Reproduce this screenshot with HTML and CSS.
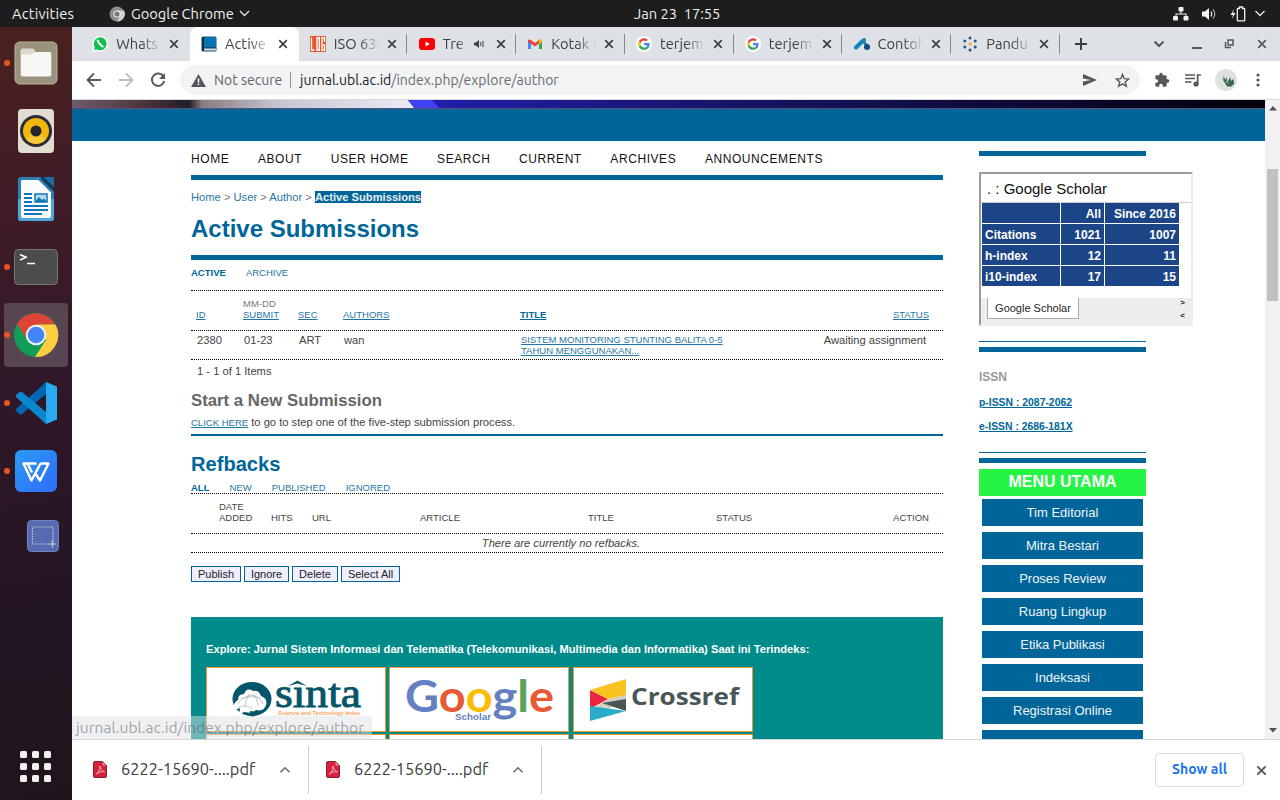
FILE: index.html
```html
<!DOCTYPE html>
<html lang="en">
<head>
<meta charset="utf-8">
<title>Active Submissions</title>
<link rel="stylesheet" href="styles.css">
</head>
<body>
<svg width="0" height="0" class="defs">
  <defs>
    <symbol id="close" viewBox="0 0 10 10"><path d="M1.2 1.2 8.8 8.8M8.8 1.2 1.2 8.8" stroke="currentColor" stroke-width="1.7"/></symbol>
    <symbol id="g" viewBox="0 0 48 48"><circle cx="24" cy="24" r="24" fill="#fff"/><g transform="translate(6.5 6.5) scale(.73)"><path fill="#EA4335" d="M24 9.5c3.54 0 6.71 1.22 9.21 3.6l6.85-6.85C35.9 2.38 30.47 0 24 0 14.62 0 6.51 5.38 2.56 13.22l7.98 6.19C12.43 13.72 17.74 9.5 24 9.5z"/><path fill="#4285F4" d="M46.98 24.55c0-1.57-.15-3.09-.38-4.55H24v9.02h12.94c-.58 2.96-2.26 5.48-4.78 7.18l7.73 6c4.51-4.18 7.09-10.36 7.09-17.65z"/><path fill="#FBBC05" d="M10.53 28.59c-.48-1.45-.76-2.99-.76-4.59s.27-3.14.76-4.59l-7.98-6.19C.92 16.46 0 20.12 0 24c0 3.88.92 7.54 2.56 10.78l7.97-6.19z"/><path fill="#34A853" d="M24 48c6.48 0 11.93-2.13 15.89-5.81l-7.73-6c-2.15 1.45-4.92 2.3-8.16 2.3-6.26 0-11.57-4.22-13.47-9.91l-7.98 6.19C6.51 42.62 14.62 48 24 48z"/></g></symbol>
    <symbol id="pdf" viewBox="0 0 14 17"><path d="M2 .5h7.500l4 4V15q0 1.500-1.500 1.500H2Q.5 16.500.5 15V2Q.5.5 2 .5z" fill="#dc1f3c" stroke="#7d2535"/><path d="M9.500 .7v3.800h3.800z" fill="#f38a98"/><path d="M3.500 13c1.500-1 4-5 3.500-8 .3 3 2.500 5.500 4.500 5.800C9 10.300 5.500 11 3.500 13z" fill="none" stroke="#fbc3cb" stroke-width=".9"/></symbol>
    <symbol id="up" viewBox="0 0 12 8"><path d="M1.500 6.300 6 1.800l4.500 4.500" fill="none" stroke="#6b6e72" stroke-width="1.600"/></symbol>
  </defs>
</svg>

<header class="topbar">
  <span class="activities">Activities</span>
  <span class="appmenu">
    <svg width="16" height="16" viewBox="0 0 16 16"><circle cx="8" cy="8" r="7.500" fill="#8c8c8c"/><path d="M8 4.500h7A7.500 7.500 0 0 1 8 15.500l3-5.500z" fill="#d0d0d0"/><circle cx="8" cy="8" r="3.600" fill="#eee"/><circle cx="8" cy="8" r="2.600" fill="#777"/></svg>
    <span class="appname">Google Chrome</span>
    <svg width="11" height="7" viewBox="0 0 11 7"><path d="M1 1l4.500 4.500L10 1" fill="none" stroke="#e8e8e8" stroke-width="1.300"/></svg>
  </span>
  <span class="clock">Jan 23&nbsp; 17:55</span>
  <span class="tray">
    <svg width="16" height="14" viewBox="0 0 16 14" fill="#f2f2f2"><rect x="5.500" y="0" width="5" height="4.500" rx="1"/><rect x="0" y="9" width="5" height="4.500" rx="1"/><rect x="10.500" y="9" width="5" height="4.500" rx="1"/><path d="M7.500 4h1v2.500h5V9h-1V7.500h-9V9h-1V6.500h5z"/></svg>
    <svg width="16" height="14" viewBox="0 0 16 14"><path d="M1 4.500h3L8 1v12L4 9.500H1z" fill="#f2f2f2"/><path d="M10 4.500q1.600 2.500 0 5" fill="none" stroke="#f2f2f2" stroke-width="1.300"/><path d="M12 2.500q3.600 4.500 0 9" fill="none" stroke="#999" stroke-width="1.300"/></svg>
    <svg width="16" height="16" viewBox="0 0 16 16"><path d="M4 3 .5 9H3l-1 4 3.500-6H3z" fill="#f2f2f2"/><path d="M8 2.500h1.500v-1.500h3v1.500H14q.7 0 .7.700v11q0 .7-.7.700H8q-.7 0-.7-.7v-11q0-.7.700-.7z" fill="none" stroke="#f2f2f2" stroke-width="1.300"/></svg>
    <svg class="tdown" width="12" height="7" viewBox="0 0 11 7"><path d="M1 1l4.500 4.500L10 1" fill="none" stroke="#e8e8e8" stroke-width="1.300"/></svg>
  </span>
</header>

<div class="desktop">
  <aside class="dock">
    <div class="slot run"><svg width="44" height="44" viewBox="0 0 46 46"><rect x="1" y="1" width="44" height="44" rx="5" fill="#9a927d" stroke="#b9b39f"/><path d="M7 10q0-2 2-2h10q1 0 2 1.500l1.500 2H37q2 0 2 2V35q0 2-2 2H9q-2 0-2-2z" fill="#f8f7f5"/><path d="M7 14V10q0-2 2-2h10q1 0 2 1.500l1.500 2q-3 2.500-5 2.500z" fill="#dedace"/></svg></div>
    <div class="slot"><svg width="46" height="46" viewBox="0 0 46 46"><rect x="5" y="1" width="36" height="44" rx="4" fill="#e2ddd1"/><circle cx="23" cy="23" r="16" fill="#2a2c37"/><circle cx="23" cy="23" r="13" fill="#f2b70f"/><path d="M13 31a13 13 0 0 0 20 0L23 23z" fill="#f7c93a"/><circle cx="23" cy="23" r="5.500" fill="#25262c"/></svg></div>
    <div class="slot"><svg width="46" height="46" viewBox="0 0 46 46"><path d="M8 1h20l13 13v28q0 3-3 3H8q-3 0-3-3V4q0-3 3-3z" fill="#2c7fb6"/><path d="M5 23h36v19q0 3-3 3H8q-3 0-3-3z" fill="#4ea7db"/><path d="M9 4h16.500L38 16.500V40q0 2-2 2H10q-2 0-2-2V5q0-1 1-1z" fill="#fbfbfb"/><path d="M30 1h10q1 0 1 1v9z" fill="#1a6ea6"/><path d="M27 2l14 14v-4L31 1z" fill="#123d5c"/><path d="M11 18h8M11 22h8M11 26h8M11 30h24M11 34h24M11 38h18" stroke="#1277b6" stroke-width="2"/><path d="M22 18h12v8H22z" fill="#b6d9ef" stroke="#1277b6" stroke-width="1.500"/><path d="m22 26 4-5 3 3 2-1.500 3 3.500z" fill="#1277b6"/></svg></div>
    <div class="slot run"><svg width="46" height="38" viewBox="0 0 46 38"><rect x="1.500" y="1.500" width="43" height="35" rx="4" fill="#4c4c4b" stroke="#767674"/><path d="m7 6.500 6 2.800-6 2.800M14 15.500h8" fill="none" stroke="#fff" stroke-width="1.700"/></svg></div>
    <div class="slot run current"><svg width="46" height="46" viewBox="0 0 46 46"><circle cx="23" cy="23" r="22" fill="#109d58"/><path d="M4 12A22 22 0 0 1 42 12.500H23q-8 1-9.500 14z" fill="#dc4437"/><path d="M23 12.500h19.500A22 22 0 0 1 22 45l11-17z" fill="#ffcd40"/><circle cx="23" cy="23" r="10.300" fill="#f1f1f1"/><circle cx="23" cy="23" r="8.300" fill="#4285f5"/></svg></div>
    <div class="slot run"><svg width="46" height="46" viewBox="0 0 46 46"><path d="M33 2v12L9 34q-1.500 1-2.500 0l-3.500-3q-1-1 0-2z" fill="#0066b0"/><path d="M3 17q-1-1 0-2l3.500-3q1-1 2.500 0l24 20v12z" fill="#0a88cf"/><path d="M33 2l11 4.500v33L33 44z" fill="#27aaf0"/></svg></div>
    <div class="slot run"><svg width="46" height="46" viewBox="0 0 46 46"><defs><linearGradient id="w" x2="1" y2="1"><stop stop-color="#2a9bf3"/><stop offset="1" stop-color="#2f6bfa"/></linearGradient></defs><rect x="2" y="2" width="42" height="42" rx="6" fill="url(#w)"/><path d="M23.500 15.500H10.500L18.500 32.500 27.500 15.500M22 25l5 7.500 8.500-17H27.500M14.500 15.500l4.500 9" fill="none" stroke="#fff" stroke-width="2.400" stroke-linejoin="round"/></svg></div>
    <div class="slot shot"><svg width="32" height="32" viewBox="0 0 32 32"><rect x=".5" y=".5" width="31" height="31" rx="4" fill="#566ab4" stroke="#7184c4"/><path d="M26 22V7H5.500v17H22" fill="none" stroke="#d0cfc8" stroke-width="1.200" stroke-dasharray="1.400 1.200"/><path d="M25.500 20.500v7M22 24h7" stroke="#d0cfc8" stroke-width="1.200"/></svg></div>
    <div class="apps"><i></i><i></i><i></i><i></i><i></i><i></i><i></i><i></i><i></i></div>
  </aside>

  <main class="window">
    <div class="tabs">
      <div class="tab nosep"><svg width="16" height="16" viewBox="0 0 16 16"><path d="M0 16 1.200 12A8 8 0 1 1 4.500 15z" fill="#fff"/><circle cx="8.200" cy="7.800" r="6.500" fill="#10c04d"/><path d="m2 14 1-3.500 2.500 2.500z" fill="#10c04d"/><path d="M5.700 4.500q1 3.500 5 6" fill="none" stroke="#fff" stroke-width="2" stroke-linecap="round"/></svg><span>Whats</span><svg class="x"><use href="#close"/></svg></div>
      <div class="tab active nosep"><svg width="16" height="16" viewBox="0 0 16 16"><rect x=".5" y=".5" width="15" height="15" rx="1.500" fill="#174a6e"/><path d="M3 1h12v10H3z" fill="#0673b3"/><path d="M3 12.500h12v2H2.500z" fill="#cfe0ea"/><path d="M1 1h2v14H1z" fill="#152c3d"/></svg><span>Active</span><svg class="x"><use href="#close"/></svg></div>
      <div class="tab"><svg width="16" height="16" viewBox="0 0 16 16"><rect width="16" height="16" fill="#e8522b"/><path d="M1.500 1.500v12.500h3M7 1.700h2.300v12.600H7zM14.500 6V1.700h-2.500v12.600h2.500V9H13" fill="none" stroke="#fff" stroke-width="1.400"/></svg><span>ISO 639</span><svg class="x"><use href="#close"/></svg></div>
      <div class="tab sound"><svg width="16" height="16" viewBox="0 0 16 16"><rect y="2" width="16" height="12" rx="3" fill="#f00"/><path d="m6.500 5.500 4.500 2.500-4.500 2.500z" fill="#fff"/></svg><span>Tre</span><svg class="spk" width="10" height="10" viewBox="0 0 10 10"><path d="M0 3.500h2L5 1v8L2 6.500H0z" fill="#3c4043"/><path d="M6.800 3v4M9 1.800v6.400" stroke="#3c4043" stroke-width="1"/></svg><svg class="x"><use href="#close"/></svg></div>
      <div class="tab"><svg width="16" height="16" viewBox="0 0 16 16"><path d="M1 4v9h3V7z" fill="#4285f4"/><path d="M15 4v9h-3V7z" fill="#34a853"/><path d="M1 3.500 4 4l4 3 4-3 3-.5v2L8 10.500 1 5.500z" fill="#ea4335"/><path d="M12 4q3-2 3 .5v1.500l-3 2.200z" fill="#fbbc04"/></svg><span>Kotak M</span><svg class="x"><use href="#close"/></svg></div>
      <div class="tab"><svg width="16" height="16"><use href="#g"/></svg><span>terjem</span><svg class="x"><use href="#close"/></svg></div>
      <div class="tab"><svg width="16" height="16"><use href="#g"/></svg><span>terjem</span><svg class="x"><use href="#close"/></svg></div>
      <div class="tab"><svg width="16" height="16" viewBox="0 0 16 16"><path d="M2 11.500 8 5.500 10 4" stroke="#1483bd" stroke-width="4" stroke-linecap="round" fill="none"/><path d="M10 6l3.500 5" stroke="#1483bd" stroke-width="3"/><circle cx="13" cy="11" r="3" fill="#124a82"/></svg><span>Contoh</span><svg class="x"><use href="#close"/></svg></div>
      <div class="tab"><svg width="16" height="16" viewBox="0 0 16 16" fill="#1f5484"><circle cx="8" cy="2" r="1.500"/><circle cx="8" cy="14" r="1.500"/><circle cx="2.800" cy="5" r="1.500"/><circle cx="13.200" cy="5" r="1.500"/><circle cx="2.800" cy="11" r="1.500"/><circle cx="13.200" cy="11" r="1.500"/><circle cx="8" cy="8" r="1.700" fill="#f5ae3c"/></svg><span>Pandu</span><svg class="x"><use href="#close"/></svg></div>
      <div class="tabctl">
        <svg width="12" height="12" viewBox="0 0 12 12"><path d="M6 0v12M0 6h12" stroke="#3c4043" stroke-width="2"/></svg>
        <svg class="c2" width="12" height="8" viewBox="0 0 12 8"><path d="M1.500 1.500 6 6l4.500-4.500" fill="none" stroke="#54575b" stroke-width="2"/></svg>
        <svg class="c3" width="10" height="12" viewBox="0 0 10 12"><path d="M0 10h10" stroke="#54575b" stroke-width="2"/></svg>
        <svg class="c4" width="10" height="10" viewBox="0 0 10 10"><path d="M4 1h5v5H4zM1.500 3v5.500H7" fill="none" stroke="#54575b" stroke-width="1.500"/></svg>
        <svg class="c5" width="10" height="10"><use href="#close"/></svg>
      </div>
    </div>

    <div class="toolbar">
      <svg width="16" height="16" viewBox="0 0 16 16"><path d="M15 8H2M8 1.500 1.500 8 8 14.500" fill="none" stroke="#54575b" stroke-width="1.800"/></svg>
      <svg width="16" height="16" viewBox="0 0 16 16"><path d="M1 8h13M8 1.500 14.500 8 8 14.500" fill="none" stroke="#babcbe" stroke-width="1.800"/></svg>
      <svg width="16" height="16" viewBox="0 0 16 16"><path d="M13.500 4.500A6.200 6.200 0 1 0 14.200 9" fill="none" stroke="#54575b" stroke-width="1.900"/><path d="M15 1v6H9z" fill="#54575b"/></svg>
      <div class="omnibox">
        <svg width="15" height="13" viewBox="0 0 15 13"><path d="M7.500 0 15 13H0z" fill="#54575b"/><path d="M7.500 4.500v4M7.500 9.500v1.600" stroke="#fff" stroke-width="1.500"/></svg>
        <span class="ns">Not secure</span><b></b>
        <span class="url"><em>jurnal.ubl.ac.id</em>/index.php/explore/author</span>
        <svg class="send" width="14" height="12" viewBox="0 0 14 12"><path d="M0 0 14 6 0 12V7.500L8 6 0 4.500z" fill="#54575b"/></svg>
        <svg width="15" height="15" viewBox="0 0 15 15"><path d="m7.500 1.500 1.700 4.200 4.500.3-3.500 2.900 1.200 4.400-3.900-2.400-3.900 2.400 1.200-4.400L1.300 6l4.500-.3z" fill="none" stroke="#54575b" stroke-width="1.400"/></svg>
      </div>
      <svg class="ext" width="16" height="16" viewBox="0 0 24 24"><path fill="#54575b" d="M20.500 11H19V7c0-1.100-.9-2-2-2h-4V3.500a2.500 2.500 0 0 0-5 0V5H4c-1.100 0-2 .9-2 2v3.800h1.500a2.700 2.700 0 0 1 0 5.400H2V20c0 1.100.9 2 2 2h3.800v-1.500a2.700 2.700 0 0 1 5.400 0V22H17c1.100 0 2-.9 2-2v-4h1.500a2.500 2.500 0 0 0 0-5z"/></svg>
      <svg class="ml" width="17" height="14" viewBox="0 0 17 14"><path d="M0 2h10M0 5.500h10M0 9h6.500" stroke="#54575b" stroke-width="1.500"/><path d="M12.700 11V2H16" fill="none" stroke="#54575b" stroke-width="1.700"/><circle cx="11" cy="11" r="2.600" fill="#54575b"/></svg>
      <svg class="av" width="22" height="22" viewBox="0 0 22 22"><circle cx="11" cy="11" r="11" fill="#dfe1df"/><path d="m6 7 2.500 4L8.500 7l2 4 1-3 .8 5 3-5 .5 4 2.500-2 1 4.500-3 3h-4l-2.500-3.500z" fill="#35684c"/><path d="m10 14 2-2 1.500 3" stroke="#a9cdb8" stroke-width=".8" fill="none"/></svg>
      <svg class="more" width="4" height="14" viewBox="0 0 4 14" fill="#54575b"><circle cx="2" cy="2" r="1.600"/><circle cx="2" cy="7" r="1.600"/><circle cx="2" cy="12" r="1.600"/></svg>
    </div>

    <div class="viewport">
      <div class="page">
        <div class="banner"><svg width="1193" height="9" viewBox="0 0 1193 9" preserveAspectRatio="none"><defs><linearGradient id="bn"><stop stop-color="#2b22c4"/><stop offset=".3" stop-color="#221eaa"/><stop offset=".6" stop-color="#15125c"/><stop offset="1" stop-color="#03020c"/></linearGradient><linearGradient id="hd"><stop stop-color="#6e5b6c"/><stop offset=".15" stop-color="#5a3f48"/><stop offset=".27" stop-color="#3a2831"/><stop offset=".34" stop-color="#201d2d"/><stop offset=".38" stop-color="#8c7a82"/><stop offset=".6" stop-color="#c4c6d2"/><stop offset="1" stop-color="#eaedf6"/></linearGradient></defs><rect width="1193" height="9" fill="url(#bn)"/><path d="M0 0h336l7 9H0z" fill="url(#hd)"/><path d="M336 0h24l8 9h-25z" fill="#4242f5"/><path d="M0 8.500h1193" stroke="#555075"/></svg></div>
        <div class="bluebar"></div>
        <div class="cols">
          <section class="content">
            <nav class="nav"><a>HOME</a><a>ABOUT</a><a>USER HOME</a><a>SEARCH</a><a>CURRENT</a><a>ARCHIVES</a><a>ANNOUNCEMENTS</a></nav>
            <div class="crumb"><a>Home</a> &gt; <a>User</a> &gt; <a>Author</a> &gt; <strong>Active Submissions</strong></div>
            <h2>Active Submissions</h2>
            <div class="sub first"><b>ACTIVE</b><a>ARCHIVE</a></div>
            <div class="row head r1"><span><u>ID</u></span><span><i>MM-DD</i><br><u>SUBMIT</u></span><span><u>SEC</u></span><span><u>AUTHORS</u></span><span><u class="bold">TITLE</u></span><span class="end"><u>STATUS</u></span></div>
            <div class="row data r1"><span>2380</span><span>01-23</span><span>ART</span><span>wan</span><span class="small"><u>SISTEM MONITORING STUNTING BALITA 0-5<br>TAHUN MENGGUNAKAN...</u></span><span class="end">Awaiting assignment</span></div>
            <div class="items">1 - 1 of 1 Items</div>
            <h4>Start a New Submission</h4>
            <p class="start"><u class="small">CLICK HERE</u> to go to step one of the five-step submission process.</p>
            <h3>Refbacks</h3>
            <div class="sub second"><b>ALL</b><a>NEW</a><a>PUBLISHED</a><a>IGNORED</a></div>
            <div class="row head r2"><span></span><span>DATE<br>ADDED</span><span>HITS</span><span>URL</span><span>ARTICLE</span><span>TITLE</span><span>STATUS</span><span class="end">ACTION</span></div>
            <div class="none">There are currently no refbacks.</div>
            <div class="buttons"><button class="b1">Publish</button><button class="b2">Ignore</button><button class="b3">Delete</button><button class="b4">Select All</button></div>
            <div class="indexed">
              <p>Explore: Jurnal Sistem Informasi dan Telematika (Telekomunikasi, Multimedia dan Informatika) Saat ini Terindeks:</p>
              <div class="logos">
                <div><svg width="178" height="63" viewBox="0 0 178 63"><ellipse cx="45" cy="31" rx="19.500" ry="17" fill="#05566b"/><path d="M27 40q-1-5 4-8 0-6 6-6 3-7 9-3 6-1 8 5 7 3 5 9-2 7-10 5l-4 3-8-1-5 3 1-7q-4 2-6 0z" fill="#fff"/><path d="M31 35q6-7 14-8 8 2 11 9M34 31q9-4 19-1M42 26q-4 7-4 12M47 26q4 7 4 12M31 39q9-3 14 2" stroke="#a8bbc1" stroke-width=".8" fill="none"/><path d="m43 43 8 1v2h-5l1 3-4-1z" fill="#05566b"/><text x="68" y="39" textLength="86" lengthAdjust="spacingAndGlyphs" class="sinta">sınta</text><path d="m81 18 9.500-5.500L100 18l-9.500-2.500z" fill="#05566b"/><text x="71" y="46.500" textLength="82" lengthAdjust="spacingAndGlyphs" class="sintasub">Science and Technology Index</text></svg></div>
                <div><svg width="178" height="63" viewBox="0 0 178 63"><text x="15" y="43.500" textLength="149" lengthAdjust="spacingAndGlyphs" class="google"><tspan fill="#6480c3">G</tspan><tspan fill="#e85a33">o</tspan><tspan fill="#fbbc05">o</tspan><tspan fill="#6480c3">g</tspan><tspan fill="#5ba35a">l</tspan><tspan fill="#e85a33">e</tspan></text><text x="65" y="51.500" textLength="36" lengthAdjust="spacingAndGlyphs" class="scholar">Scholar</text></svg></div>
                <div><svg width="178" height="63" viewBox="0 0 178 63"><path d="M34 31 52 27v6l-18 8-18 2z" fill="#d3cfc1"/><path d="M16 22v19l18-10z" fill="#e9263d"/><path d="M16 22 52 11v16l-18 4z" fill="#fac323"/><path d="M28 35 52 31v12z" fill="#4a5557"/><path d="M16 38l36 5-36 10z" fill="#28acc9"/><text x="57" y="37" textLength="108" lengthAdjust="spacingAndGlyphs" class="crossref">Crossref</text></svg></div>
                <div></div><div></div><div></div>
              </div>
            </div>
          </section>
          <aside class="side">
            <div class="thick t1"></div>
            <div class="gs">
              <div class="gst">. : Google Scholar</div>
              <table><tr><th></th><th>All</th><th>Since 2016</th></tr><tr><th>Citations</th><td>1021</td><td>1007</td></tr><tr><th>h-index</th><td>12</td><td>11</td></tr><tr><th>i10-index</th><td>17</td><td>15</td></tr></table>
              <div class="gsf"><span>Google Scholar</span><div><b>&gt;</b><b>&lt;</b></div></div>
            </div>
            <div class="thin"></div><div class="thick"></div>
            <div class="issn"><strong>ISSN</strong><u>p-ISSN : 2087-2062</u><u>e-ISSN : 2686-181X</u></div>
            <div class="thin"></div><div class="thick"></div>
            <div class="mh">MENU UTAMA</div>
            <div class="menu"><a>Tim Editorial</a><a>Mitra Bestari</a><a>Proses Review</a><a>Ruang Lingkup</a><a>Etika Publikasi</a><a>Indeksasi</a><a>Registrasi Online</a><a></a></div>
          </aside>
        </div>
      </div>
      <div class="scroll"><svg width="8" height="5" viewBox="0 0 8 5"><path d="M0 4.500 4 0l4 4.500z" fill="#505050"/></svg><i></i><svg class="dn" width="8" height="5" viewBox="0 0 8 5"><path d="M0 0h8L4 4.500z" fill="#505050"/></svg></div>
      <div class="status">jurnal.ubl.ac.id/index.php/explore/author</div>
    </div>

    <footer class="shelf">
      <div class="dl"><svg width="14" height="17"><use href="#pdf"/></svg><span>6222-15690-....pdf</span><svg width="12" height="8"><use href="#up"/></svg></div>
      <div class="dl"><svg width="14" height="17"><use href="#pdf"/></svg><span>6222-15690-....pdf</span><svg width="12" height="8"><use href="#up"/></svg></div>
      <div class="showall">Show all</div>
      <svg class="x2" width="11" height="11"><use href="#close"/></svg>
    </footer>
  </main>
</div>
</body>
</html>
```
FILE: styles.css
```css
* { box-sizing: border-box; }
body { margin: 0; width: 1280px; height: 800px; overflow: hidden; font-family: Ubuntu, "Noto Sans", sans-serif; background: #fff; }
svg { display: block; flex: none; }
.defs { position: absolute; }

.topbar { height: 27px; background: #1d1d1d; color: #f0f0f0; display: flex; align-items: center; padding: 0 14px 0 12px; font-size: 14.670px; }
.activities { width: 97px; letter-spacing: .2px; }
.appmenu { display: flex; align-items: center; width: 525px; }
.appname { margin: 0 5px 0 6px; white-space: nowrap; }
.clock { flex: 1; }
.tray { display: flex; align-items: center; gap: 12.500px; }
.tray .tdown { margin-left: -4px; }

.desktop { display: flex; height: 773px; }
.dock { width: 72px; background: linear-gradient(168deg, #49211f 0%, #3e1b29 28%, #301828 45%, #241523 75%, #20141c 100%); display: flex; flex-direction: column; padding: 4px 4px 0; flex: none; }
.slot { height: 64px; margin-bottom: 4px; display: flex; align-items: center; justify-content: center; position: relative; border-radius: 4px; flex: none; }
.slot.current { background: #584552; }
.slot.run::before { content: ""; position: absolute; left: 0; top: 29px; width: 6px; height: 6px; border-radius: 50%; background: #e95420; }
.slot.shot { justify-content: flex-end; padding: 0 9px 7px 0; }
.apps { display: grid; grid-template-columns: repeat(3, 7px); gap: 5px; margin: auto 0 18px 16px; }
.apps i { width: 7px; height: 7px; border-radius: 1.500px; background: #f2f0f1; }

.window { width: 1208px; display: flex; flex-direction: column; }
.tabs { height: 34px; background: #dee1e6; display: flex; padding-left: 9px; }
.tab { width: 108.750px; flex: none; display: flex; align-items: center; padding-left: 11.300px; position: relative; color: #3c4043; font-size: 14.670px; }
.tab span { width: 46px; margin: 0 7px 0 8px; overflow: hidden; white-space: nowrap; line-height: 20px; mask-image: linear-gradient(90deg, #000 55%, transparent 100%); }
.tab .x { width: 10px; height: 10px; }
.tab.sound span { width: 26px; margin-right: 5px; }
.tab .spk { margin-right: 12px; }
.tab:not(.nosep)::after { content: ""; position: absolute; right: 0; top: 7px; width: 1px; height: 20px; background: #84878b; }
.tab.active { background: #fff; border-radius: 8px 8px 0 0; }
.tabctl { display: flex; align-items: center; padding-left: 15.500px; color: #54575b; }
.tabctl .c2 { margin-left: 66px; }
.tabctl .c3 { margin-left: 27px; }
.tabctl .c4 { margin-left: 22px; }
.tabctl .c5 { margin-left: 23px; }

.toolbar { height: 39px; border-bottom: 1px solid #d9dbdd; display: flex; align-items: center; padding: 0 20px 0 14px; }
.toolbar > svg { margin-right: 16px; }
.toolbar > svg:nth-child(3) { margin-right: 14px; }
.omnibox { width: 960px; height: 30px; border-radius: 15px; background: #f1f3f4; display: flex; align-items: center; padding: 0 10px 0 11px; font-size: 14px; color: #5f6368; flex: none; }
.omnibox .ns { width: 76px; margin-left: 8px; white-space: nowrap; }
.omnibox b { width: 1px; height: 16px; background: #8f9296; }
.url { margin-left: 9px; flex: 1; color: #6a6d71; }
.url em { font-style: normal; color: #202124; }
.send { margin-right: 18px; }
.toolbar > .ext { margin: 0 15px 0 14px; }
.toolbar > .ml { margin-right: 13px; }
.toolbar > .av { margin-right: 19px; }
.toolbar > .more { margin: 0; }

.viewport { height: 639px; display: flex; position: relative; overflow: hidden; font-family: "Liberation Sans", Arial, sans-serif; }
.page { width: 1193px; height: 639px; overflow: hidden; }
.banner { height: 9px; }
.bluebar { height: 32px; background: #006699; }
.cols { display: flex; padding-left: 119px; gap: 36px; align-items: flex-start; }
.content { width: 752px; font-size: 11.180px; line-height: 11px; color: #444; }
.nav { height: 39px; border-bottom: 5px solid #006699; display: flex; gap: 28.600px; padding-top: 12px; font-size: 12px; line-height: 12px; letter-spacing: .57px; color: #111; }
.crumb { margin-top: 11px; height: 12px; line-height: 12px; color: #777; white-space: nowrap; }
.crumb a, .sub a, u { color: #1f76a5; }
.crumb strong { background: #006699; color: #e8eef2; display: inline-block; }
h2, h3, h4, p { margin: 0; }
h2 { color: #006699; font-size: 24px; line-height: 28px; height: 57px; padding-top: 12px; border-bottom: 5px solid #006699; }
.sub { display: flex; gap: 20px; font-size: 9.520px; }
.sub b { color: #006699; }
.sub.first { padding-top: 7px; height: 30px; }
.sub.second { margin-top: -1px; padding-bottom: 1px; }
.row { display: grid; border-top: 1px dotted #000; border-bottom: 1px dotted #000; }
.row.r1 { grid-template-columns: 47px 55px 45px 177px 220px 1fr; padding-left: 5px; padding-right: 14px; }
.row.head { height: 41px; font-size: 9.520px; padding-top: 7px; align-items: end; padding-bottom: 11px; }
.row i { font-style: normal; color: #777; }
.row .end { text-align: right; }
.row.data { border-top: 0; padding-top: 4px; height: 29px; padding-left: 6px; padding-right: 17px; }
.small, .row .small { font-size: 9.520px; }
.row .small { margin-top: -1px; }
.small { line-height: 11px; }
.bold { font-weight: bold; color: #006699; }
.items { padding: 6px 0 0 6px; height: 31px; }
h4 { font-size: 16.780px; line-height: 20px; color: #666; height: 26px; }
.start { height: 19px; border-bottom: 2px solid #006699; }
h3 { font-size: 20.130px; line-height: 24px; color: #006699; margin-top: 16px; height: 31px; }
.row.r2 { grid-template-columns: 28px 52px 41px 108px 168px 128px 100px 1fr; padding-right: 14px; margin-top: -1px; }
.none { text-align: center; font-style: italic; padding: 4px 12px 0 0; height: 19px; border-bottom: 1px dotted #000; }
.buttons { display: flex; gap: 3px; margin-top: 13px; }
button { font: 11px/12px "Liberation Sans", Arial, sans-serif; color: #222; background: #eeeeff; border: 1px solid #006699; border-radius: 0; height: 16px; padding: 0; }
.b1 { width: 50px; } .b2 { width: 45px; } .b3 { width: 46px; } .b4 { width: 59px; }
.indexed { margin-top: 35px; height: 160px; background: #008b8b; padding: 27px 15px; color: #fff; }
.indexed p { font-weight: bold; white-space: nowrap; height: 23px; }
.logos { display: grid; grid-template-columns: repeat(3, 180px); gap: 2px 3.400px; }
.logos div { height: 65px; background: #fff; border: 1px solid #ee9a30; }
.sinta { font: 39px "Liberation Serif", serif; fill: #05566b; stroke: #05566b; stroke-width: .9px; }
.sintasub { font: bold 5.500px "Liberation Sans", sans-serif; fill: #f2a25c; }
.google { font: bold 44px Lato, sans-serif; }
.scholar { font: bold 9px "Liberation Sans", sans-serif; fill: #6480c3; }
.crossref { font: bold 23px "Open Sans", sans-serif; fill: #4a5557; }

.side { width: 167px; flex: none; }
.thick { height: 5px; background: #006699; margin-top: 5px; }
.thick.t1 { margin-top: 10px; }
.thin { height: 1px; background: #006699; }
.gs { width: 214px; height: 154px; margin: 16px 0 15px; border: 2px solid #eee; border-top-color: #999; border-left-color: #999; }
.gst { height: 29px; border-bottom: 1px solid #ccc; font-size: 15px; line-height: 29px; padding-left: 6px; color: #111; }
table { border-spacing: 1px; margin-top: -1px; font-size: 12px; font-weight: bold; color: #fff; width: 199px; }
td, th { background: #1c4587; height: 20px; padding: 1px 3px 0; line-height: 14px; text-align: right; }
th:first-child { text-align: left; width: 78px; }
th:nth-child(2), td:nth-child(2) { width: 43px; }
.gsf { background: #eee; height: 28px; margin-top: 11px; display: flex; justify-content: space-between; padding: 0 6px 0 6px; font-size: 11px; color: #222; }
.gsf span { width: 92px; height: 21px; border: 1px solid #aaa; border-top: 0; background: #fff; line-height: 20px; text-align: center; }
.gsf b { display: block; font-size: 8px; line-height: 9px; height: 13px; }
.issn { height: 100px; padding-top: 18px; display: flex; flex-direction: column; font-weight: bold; font-size: 10.400px; line-height: 12px; gap: 12px; }
.issn strong { font-size: 12px; line-height: 14px; color: #999; margin-bottom: 1px; }
.issn u { color: #006699; }
.mh { margin-top: 6px; height: 27px; background: #25f444; color: #fff; font-weight: bold; font-size: 16px; line-height: 25px; text-align: center; }
.menu { padding: 3px; display: flex; flex-direction: column; gap: 6px; }
.menu a { height: 27px; background: #006699; color: #f0f4f7; font-size: 13px; line-height: 27px; text-align: center; }

.scroll { width: 15px; background: #f1f1f1; display: flex; flex-direction: column; align-items: center; padding: 6px 0; }
.scroll i { width: 11px; height: 132px; background: #c1c1c1; margin-top: 58px; }
.scroll .dn { margin-top: auto; }
.status { position: absolute; left: 0; bottom: 0; width: 300px; height: 23px; padding-left: 4px; font: 15.600px/23px Ubuntu, "Noto Sans", sans-serif; color: rgba(80,83,87,.5); background: rgba(222,225,230,.5); border-radius: 0 4px 0 0; white-space: nowrap; }

.shelf { height: 61px; border-top: 1px solid #d5d7d9; display: flex; align-items: center; color: #3c4043; font-size: 16.400px; }
.dl { height: 48px; width: 233px; border-right: 1px solid #c9cbcd; display: flex; align-items: center; padding-left: 17px; }
.dl:first-child { width: 237px; padding-left: 21px; }
.dl span { width: 144px; margin: 0 14px 0 14px; white-space: nowrap; position: relative; top: -1px; }
.dl svg { margin-top: -1px; }
.showall { margin-left: 613px; width: 89px; height: 34px; border: 1px solid #dadce0; border-radius: 4px; color: #1a73e8; font-weight: bold; font-size: 14px; line-height: 31px; text-align: center; }
.x2 { margin-left: 12px; color: #54575b; }
```
